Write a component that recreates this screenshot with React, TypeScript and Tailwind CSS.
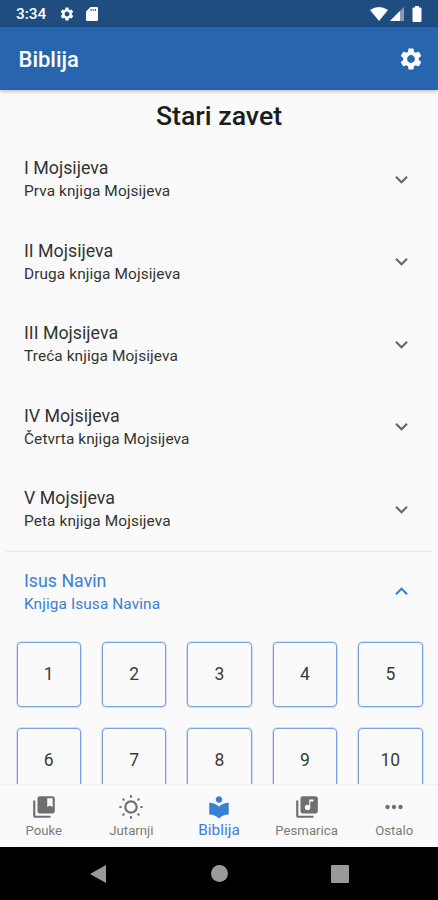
import { useState } from 'react';
import {
  MdCollectionsBookmark,
  MdExpandLess,
  MdExpandMore,
  MdLibraryMusic,
  MdLocalLibrary,
  MdMoreHoriz,
  MdSettings,
} from 'react-icons/md';
import { clsx } from 'clsx';

interface Book {
  title: string;
  subtitle: string;
  chapters: number;
}

const books: Book[] = [
  { title: 'I Mojsijeva', subtitle: 'Prva knjiga Mojsijeva', chapters: 10 },
  { title: 'II Mojsijeva', subtitle: 'Druga knjiga Mojsijeva', chapters: 10 },
  { title: 'III Mojsijeva', subtitle: 'Treća knjiga Mojsijeva', chapters: 10 },
  { title: 'IV Mojsijeva', subtitle: 'Četvrta knjiga Mojsijeva', chapters: 10 },
  { title: 'V Mojsijeva', subtitle: 'Peta knjiga Mojsijeva', chapters: 10 },
  { title: 'Isus Navin', subtitle: 'Knjiga Isusa Navina', chapters: 10 },
];

const tabs = [
  { label: 'Pouke', icon: MdCollectionsBookmark },
  { label: 'Jutarnji', icon: SunIcon },
  { label: 'Biblija', icon: MdLocalLibrary },
  { label: 'Pesmarica', icon: MdLibraryMusic },
  { label: 'Ostalo', icon: MdMoreHoriz },
];

export default function App() {
  const [open, setOpen] = useState(5);
  const [tab, setTab] = useState('Biblija');

  return (
    <div className="flex h-[900px] w-[438px] flex-col overflow-hidden bg-[#fafafa] font-['Roboto',sans-serif]">
      <StatusBar />
      <header className="relative z-10 flex h-[63px] shrink-0 items-center justify-between bg-[#2766af] pt-[2px] pr-[14px] pl-[18.5px] text-white shadow-[0_1px_4px_rgba(0,0,0,0.3)]">
        <h1 className="text-[22px] font-medium">Biblija</h1>
        <button aria-label="Podešavanja" className="pb-[2px]">
          <MdSettings className="size-[26px]" />
        </button>
      </header>

      <main className="min-h-0 flex-1 overflow-hidden">
        <h2 className="flex h-[48px] items-center justify-center pt-[5px] text-[26.7px] font-medium text-[#1c1c1c]">
          Stari zavet
        </h2>
        {books.map((book, i) => (
          <BookTile key={book.title} book={book} open={open === i} onToggle={() => setOpen(open === i ? -1 : i)} />
        ))}
      </main>

      <nav className="grid h-[63px] shrink-0 grid-cols-5 border-t border-[#f0f0f0] bg-[#fafafa]">
        {tabs.map(({ label, icon: Icon }) => (
          <button
            key={label}
            onClick={() => setTab(label)}
            className={clsx('flex flex-col items-center pt-[9px]', tab === label ? 'text-[#3a80d2]' : 'text-[#6f6f6f]')}
          >
            <Icon className="size-[26px]" />
            <span
              className={clsx(
                'leading-[20px]',
                tab === label ? 'text-[15.4px]' : 'pt-px text-[13.2px] text-[#7c7c7c]',
              )}
            >
              {label}
            </span>
          </button>
        ))}
      </nav>
      <SystemNav />
    </div>
  );
}

function BookTile({ book, open, onToggle }: { book: Book; open: boolean; onToggle: () => void }) {
  const Chevron = open ? MdExpandLess : MdExpandMore;
  return (
    <section>
      <div className={clsx('mx-[6px] h-px', open && 'bg-[#e8e8e8]')} />
      <button
        onClick={onToggle}
        className={clsx(
          'flex h-[81.5px] w-full items-center justify-between pr-[24px] pl-6 text-left',
          open ? 'text-[#3a80d2]' : 'text-[#333]',
        )}
      >
        <span className="flex flex-col pb-px">
          <span className="text-[17.8px] leading-6">{book.title}</span>
          <span className="text-[15.4px] leading-[22px] tracking-[0.1px]">{book.subtitle}</span>
        </span>
        <Chevron className={clsx('mb-px size-[25px]', !open && 'text-[#666]')} />
      </button>
      {open && (
        <div className="grid grid-cols-5 gap-[21px] pt-[9px] pr-[15.5px] pl-[16.5px]">
          {Array.from({ length: book.chapters }, (_, n) => (
            <button
              key={n}
              className="flex h-[64.5px] items-center justify-center rounded-[4px] border border-[#78a3dc] text-[17.5px] text-[#3a3a3a] shadow-[0_0_0_0.5px_#a9c4ea]"
            >
              {n + 1}
            </button>
          ))}
        </div>
      )}
    </section>
  );
}

function StatusBar() {
  return (
    <div className="flex h-[27px] shrink-0 items-center bg-[#1f4d80] pt-px pr-4 pl-4 text-white">
      <span className="pt-px text-[15.4px] font-medium">3:34</span>
      <MdSettings className="ml-[12.5px] size-4" />
      <svg viewBox="0 0 12 14" className="ml-[11px] h-[14px] w-3">
        <path
          fill="currentColor"
          fillRule="evenodd"
          d="M4.5 0H11a1 1 0 0 1 1 1v12a1 1 0 0 1-1 1H1a1 1 0 0 1-1-1V4.5zM4.5 2v2h1V2zm2.2 0v2h1V2zm2.2 0v2h1V2z"
        />
      </svg>
      <svg viewBox="0 0 18 14" className="ml-auto h-[14px] w-[18px]">
        <path fill="currentColor" d="M0 3Q9-3 18 3L9 14z" />
      </svg>
      <svg viewBox="0 0 14 14" className="ml-[2px] h-[14px] w-[14px]">
        <path fill="currentColor" fillOpacity=".45" d="M14 0v14H0z" />
        <path fill="currentColor" d="M10 4v10H0z" />
      </svg>
      <svg viewBox="0 0 10 16" className="ml-2 h-4 w-[10px]">
        <path
          fill="currentColor"
          d="M3 0h4v1.5h1.5a1 1 0 0 1 1 1V15a1 1 0 0 1-1 1h-7a1 1 0 0 1-1-1V2.5a1 1 0 0 1 1-1H3z"
        />
      </svg>
    </div>
  );
}

function SunIcon({ className }: { className?: string }) {
  return (
    <svg viewBox="0 0 26 26" fill="none" stroke="currentColor" strokeWidth="2.2" strokeLinecap="round" className={className}>
      <circle cx="13" cy="13" r="5.7" />
      <path d="M13 2.200v.6M13 23.200v.6M2.200 13h.6M23.200 13h.6M5.300 5.300l.4.4M20.300 20.300l.4.4M5.300 20.700l.4-.4M20.300 5.700l.4-.4" />
    </svg>
  );
}

function SystemNav() {
  return (
    <div className="flex h-[53px] shrink-0 items-center justify-between bg-black px-[89px] text-[#9a9a9a]">
      <svg viewBox="0 0 18 20" className="h-5 w-[18px]">
        <path fill="currentColor" d="M17 1v18L1 10z" />
      </svg>
      <div className="size-[17px] rounded-full bg-current" />
      <div className="size-[18px] rounded-[1px] bg-current" />
    </div>
  );
}
